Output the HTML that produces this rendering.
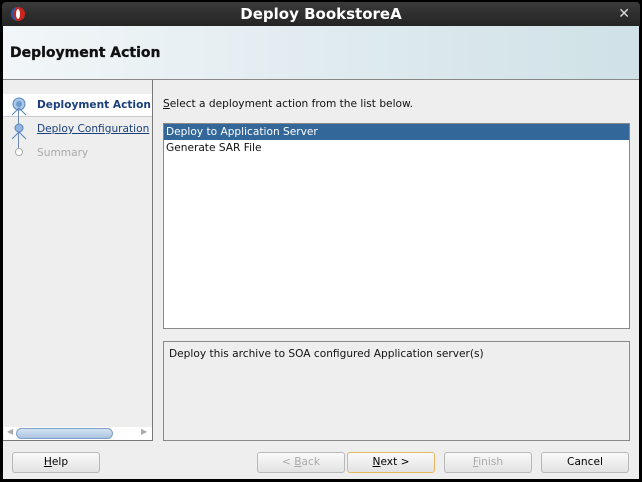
<!DOCTYPE html>
<html><head><style>
*{margin:0;padding:0;box-sizing:border-box}
body{width:642px;height:482px;background:#000;font-family:"DejaVu Sans","Liberation Sans",sans-serif;font-size:10.6px;position:relative;overflow:hidden}
.a{position:absolute;white-space:nowrap}
.title{left:2px;top:2px;width:638px;height:24px;background:linear-gradient(#3a3a3a,#242424);border-radius:4px 4px 0 0;color:#fff;font-weight:bold;font-size:15px;text-align:center;line-height:24px}
.win{left:3px;top:26px;width:636px;height:453px;background:#eeeeee}
.hdr{left:0;top:0;width:636px;height:54px;background:linear-gradient(90deg,#f2f6f8,#cfe1e7);border-bottom:1px solid #888}
.btn{top:426px;height:21px;border:1px solid #b8b8b8;border-radius:3px;background:linear-gradient(#fafafa,#e2e2e2);text-align:center;line-height:19px;font-size:10.6px}
</style></head><body>
<div class="a title">Deploy BookstoreA
<svg class="a" style="left:8px;top:4px" width="16" height="16"><circle cx="8" cy="8" r="7" fill="#c9251c"/><path d="M8 1a7 7 0 0 0 0 14a4 7 0 0 1 0-14z" fill="#2a56a8"/><ellipse cx="8" cy="8" rx="2" ry="5" fill="#fff"/></svg>
<span class="a" style="right:10px;top:0;font-size:14px;color:#ddd">✕</span></div>
<div class="a win">
<div class="a hdr"><span class="a" style="left:7px;top:19px;font-size:14px;font-weight:600;color:#111;-webkit-text-stroke:0.3px #111">Deployment Action</span></div>
<div class="a" style="left:0;top:54px;width:150px;height:361px;border-right:1px solid #777;border-bottom:1px solid #777">
<div class="a" style="left:0;top:14px;width:149px;height:23px;background:#fff;border-bottom:1px solid #ccc"></div>
<div class="a" style="left:15px;top:24px;width:1px;height:50px;background:#6b8bb5"></div>
<svg class="a" style="left:8px;top:16px" width="16" height="20"><circle cx="8" cy="8" r="6" fill="#aac9ea" stroke="#5b84b9"/><circle cx="8" cy="8" r="3" fill="#6e9bd0"/><path d="M1 19L8 12L15 19" stroke="#5b84b9" fill="none"/></svg>
<svg class="a" style="left:8px;top:40px" width="16" height="20"><circle cx="8" cy="8" r="4" fill="#8fb5e0" stroke="#5b84b9"/><path d="M1 19L8 12L15 19" stroke="#5b84b9" fill="none"/></svg>
<svg class="a" style="left:11px;top:67px" width="10" height="10"><circle cx="5" cy="5" r="3.5" fill="#fff" stroke="#aaa"/></svg>
<span class="a" style="left:34px;top:19px;font-weight:bold;color:#1a3f7a">Deployment Action</span>
<span class="a" style="left:34px;top:43px;color:#1a3f7a;text-decoration:underline">Deploy Configuration</span>
<span class="a" style="left:34px;top:67px;color:#aaa">Summary</span>
<div class="a" style="left:1px;top:347px;width:148px;height:13px;background:#fff"></div>
<div class="a" style="left:13px;top:348px;width:97px;height:11px;border-radius:6px;background:linear-gradient(#d4e3f2,#aac4e0);border:1px solid #7f9fc6"></div>
<span class="a" style="left:4px;top:347px;font-size:8px;color:#aaa">◀</span><span class="a" style="left:138px;top:347px;font-size:8px;color:#aaa">▶</span>
</div>
<span class="a" style="left:160px;top:72px;color:#111"><u>S</u>elect a deployment action from the list below.</span>
<div class="a" style="left:160px;top:97px;width:467px;height:206px;background:#fff;border:1px solid #888">
<div style="height:16px;background:#336699;color:#fff;padding-left:2px;line-height:16px">Deploy to Application Server</div>
<div style="padding-left:2px;line-height:16px;color:#111">Generate SAR File</div></div>
<div class="a" style="left:160px;top:315px;width:467px;height:100px;border:1px solid #888;padding:6px 5px;color:#111">Deploy this archive to SOA configured Application server(s)</div>
<div class="a btn" style="left:9px;width:88px"><u>H</u>elp</div>
<div class="a btn" style="left:254px;width:88px;color:#aaa">&lt; <u>B</u>ack</div>
<div class="a btn" style="left:344px;width:88px;border-color:#e8b860"><u>N</u>ext &gt;</div>
<div class="a btn" style="left:441px;width:88px;color:#aaa"><u>F</u>inish</div>
<div class="a btn" style="left:538px;width:88px">Cancel</div>
</div>
</body></html>
